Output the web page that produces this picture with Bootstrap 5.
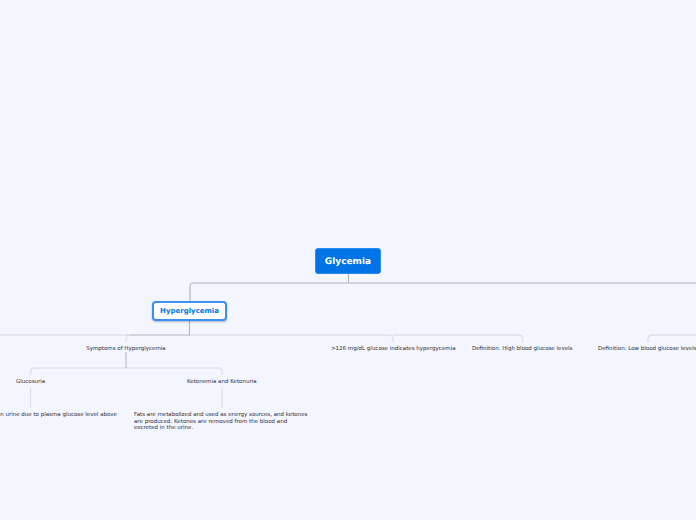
<!DOCTYPE html>
<html lang="en">
<head>
<meta charset="utf-8">
<title>Glycemia</title>
<link href="https://cdn.jsdelivr.net/npm/bootstrap@5.3.0/dist/css/bootstrap.min.css" rel="stylesheet">
<style>
html,body{margin:0;height:100%;background:#f3f6ff;overflow:hidden}
.map-canvas{width:696px;height:520px;overflow:hidden;font-family:"DejaVu Sans",Verdana,sans-serif;text-rendering:geometricPrecision}
.map-lines{left:0;top:0}
.map-node{position:absolute;white-space:nowrap}
.topic-main{left:315px;top:248px;width:66px;height:26px;padding-top:3px;background:#0073e6;color:#fff;font-size:9px;font-weight:700;border-radius:3px;border:1px solid #2a8af0}
.topic-sub{left:152px;top:301px;width:75px;height:20px;background:#fff;color:#0073e6;font-size:7px;font-weight:700;border:2px solid #3d90ec;border-radius:4px;box-shadow:0 1px 2px rgba(40,60,110,.35)}
.leaf{font-size:5.5px;line-height:6.6px;color:#2c2c36}
.c1{left:86px;top:346px;width:80px}
.c2{left:331px;top:346px}
.c3{left:472px;top:346px}
.c4{left:598px;top:346px}
.c5{left:16px;top:379px}
.c6{left:187px;top:379px}
.c7{right:579px;top:412px}
.c8{left:134px;top:412px;width:176px;white-space:normal}
</style>
</head>
<body>
<div class="map-canvas position-relative">
<svg class="map-lines position-absolute" width="696" height="520" fill="none">
  <g stroke="#c8c9d1" stroke-width="1.6">
    <path d="M696 283H194Q190 283 190 287"/>
    <path d="M126 335H190"/>
  </g>
  <g stroke="#b4b6be" stroke-width="1.2">
    <path d="M190 287V301"/>
    <path d="M348.500 274V283"/>
    <path d="M189.500 321V335"/>
  </g>
  <g stroke="#e0e1ea" stroke-width="1.5">
    <path d="M0 335H126"/>
    <path d="M190 335H389Q393 335 393 339V342"/>
    <path d="M393 335H518Q522.500 335 522.500 339.500V342"/>
    <path d="M648 342V339.500Q648 335 652.500 335H696"/>
    <path d="M30.500 375V372Q30.500 368 34.500 368H218Q222 368 222 372V375"/>
    <path d="M126 342V339Q126 335 130 335"/>
  </g>
  <path d="M126 352V368" stroke="#c8c9d1" stroke-width="1.500"/>
  <path d="M30.500 388V408M222 388V408" stroke="#dcdee6" stroke-width="1.200"/>
</svg>
<div class="map-node topic-main d-flex align-items-center justify-content-center">Glycemia</div>
<div class="map-node topic-sub d-flex align-items-center justify-content-center">Hyperglycemia</div>
<div class="map-node leaf c1 text-center">Symptoms of Hyperglycemia</div>
<div class="map-node leaf c2">&gt;126 mg/dL glucose indicates hypergycemia</div>
<div class="map-node leaf c3">Definition: High blood glucose levels</div>
<div class="map-node leaf c4">Definition: Low blood glucose levels</div>
<div class="map-node leaf c5">Glucosuria</div>
<div class="map-node leaf c6">Ketonemia and Ketonuria</div>
<div class="map-node leaf c7">Glucose in urine due to plasma glucose level above</div>
<div class="map-node leaf c8">Fats are metabolized and used as energy sources, and ketones are produced. Ketones are removed from the blood and excreted in the urine.</div>
</div>
<script src="https://cdn.jsdelivr.net/npm/bootstrap@5.3.0/dist/js/bootstrap.bundle.min.js"></script>
</body>
</html>
